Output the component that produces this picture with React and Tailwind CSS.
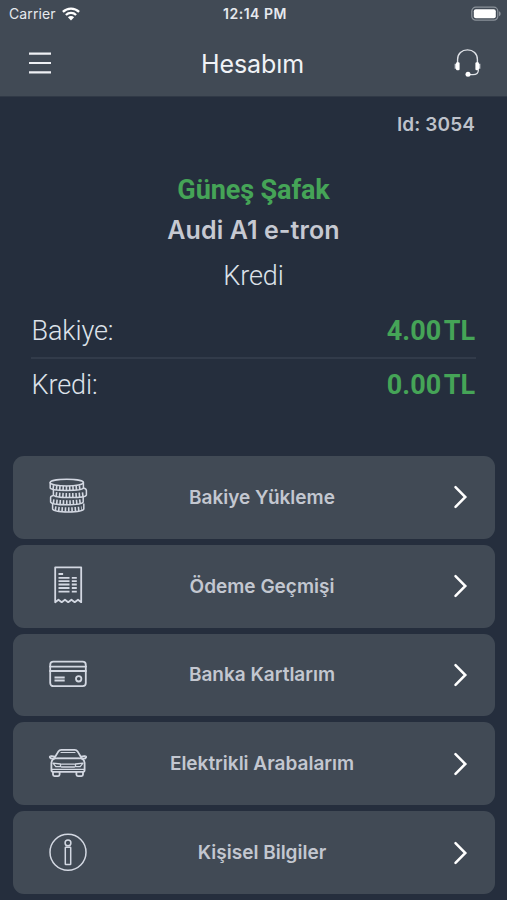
import React from "react";

const INTER = "font-['Inter','Liberation_Sans',sans-serif]";
const ROBOTO = "font-['Roboto','Liberation_Sans',sans-serif]";

function Icon({ children }) {
  return (
    <svg width="40" height="40" viewBox="0 0 40 40" fill="none" stroke="currentColor" strokeWidth="1.8" strokeLinecap="round" strokeLinejoin="round" className="shrink-0">
      {children}
    </svg>
  );
}

function CoinsIcon() {
  return (
    <Icon>
      <g strokeWidth="1.5">
        <ellipse cx="18.8" cy="5.6" rx="16.6" ry="3.3" />
        <path d="M2.2 5.6v5.4Q3 13.400 18.800 13.400T35.400 11V5.600" />
        <path d="M5.400 13v5Q6.200 20.600 22 20.600T38.400 18v-4.500c0-1.200-1.200-2-3-2.500" />
        <path d="M5.400 18.500c-1.800.4-2.800 1-2.800 2V25Q3.400 27.800 18.800 27.800T35.200 25v-4.500" />
        <path d="M4.600 27v5Q5.400 34.900 20.200 34.900T35.800 32v-5" />
      </g>
      <path d="M4.500 10.300q14.300 2 29 0M7.600 17.300q14.300 2 29 0M4.800 24.400q14.300 2 28.400 0M6.800 31.500q13.400 2 27 0" strokeWidth="4.400" strokeDasharray="1.600 1.700" strokeLinecap="butt" />
    </Icon>
  );
}

function ReceiptIcon() {
  return (
    <Icon>
      <path d="M7.200 36.200V1.300h26v34.900l-3.200-2.500-3.300 2.500-3.250-2.500-3.250 2.500-3.250-2.500-3.250 2.500-3.250-2.500z" />
      <path d="M10.500 8h4.600M10.500 11.800h11M10.500 15.200h11M10.500 18.500h11M10.500 22h11M10.500 25.700h11M23.800 11.800h5M23.800 15.200h5M23.800 18.500h5M23.800 22h5M23.800 25.700h5" strokeLinecap="butt" />
    </Icon>
  );
}

function CardIcon() {
  return (
    <Icon>
      <rect x="2.200" y="6.700" width="35.600" height="24.500" rx="3.200" />
      <path d="M2 11.600h36M2 16h36" />
      <path d="M6.500 22.500h10.200M6.500 25.500h10.200" strokeLinecap="butt" />
      <circle cx="30.700" cy="23.800" r="2.700" />
    </Icon>
  );
}

function CarIcon() {
  return (
    <Icon>
      <path d="M6.300 14.300 10.400 7.400c.7-1.100 1.500-1.600 2.900-1.600h13.400c1.400 0 2.200.5 2.900 1.600l4.100 6.900" />
      <path d="M9 14.300h22M13 8.500h14" strokeWidth="1.200" />
      <path d="M6.300 14.300c-1.700 1.200-2.900 2.600-2.900 4.500v7.100c0 1.200.7 1.900 1.900 1.900h29.400c1.200 0 1.900-.7 1.900-1.900v-7.100c0-1.900-1.200-3.300-2.900-4.500z" />
      <path d="M6 14.600c-1.900.3-3.800-.3-4.200-1.500-.3-1 2.300-1.400 4.800-.5M34 14.600c1.900.3 3.800-.3 4.200-1.500.3-1-2.300-1.400-4.800-.5" />
      <path d="M5 28v2.600c0 1 .5 1.500 1.500 1.500h3.600c1 0 1.500-.5 1.500-1.500V28M28.400 28v2.600c0 1 .5 1.500 1.500 1.500h3.600c1 0 1.500-.5 1.500-1.500V28" />
      <path d="M13.500 20.200h13M13.500 23h13M4 25.300h32M5 19.200l7.500.8v2.600H7.800L5 19.200M35 19.200l-7.500.8v2.600h4.700z" strokeWidth="1.300" />
    </Icon>
  );
}

function InfoIcon() {
  return (
    <Icon>
      <g strokeWidth="1.500">
        <circle cx="20" cy="19.200" r="18" />
        <circle cx="20" cy="9.900" r="2.900" />
        <rect x="17.300" y="14.200" width="5.400" height="17.200" rx=".5" />
      </g>
    </Icon>
  );
}

const items = [
  { label: "Bakiye Yükleme", icon: CoinsIcon },
  { label: "Ödeme Geçmişi", icon: ReceiptIcon },
  { label: "Banka Kartlarım", icon: CardIcon },
  { label: "Elektrikli Arabalarım", icon: CarIcon },
  { label: "Kişisel Bilgiler", icon: InfoIcon },
];

function StatusBar() {
  return (
    <div className="grid h-7 grid-cols-3 items-center pl-[9px] pr-[6px] text-[13px] leading-none text-[#e6e9ee]">
      <div className="flex items-center gap-[6px]">
        <span className="text-[14px] tracking-[0.1px]">Carrier</span>
        <svg width="18" height="14" viewBox="0 0 18 14" fill="none" stroke="#fff" strokeWidth="2.300">
          <path d="M.9 4.900a11.600 11.600 0 0 1 16.200 0M3.900 8a7.300 7.300 0 0 1 10.200 0" />
          <path d="M5.900 10.200a4.400 4.400 0 0 1 6.200 0L9 13.500z" fill="#fff" stroke="none" />
        </svg>
      </div>
      <span className="text-center text-[14px] font-semibold tracking-[0.5px] whitespace-nowrap">12:14 PM</span>
      <svg width="30" height="16" viewBox="0 0 30 16" className="justify-self-end">
        <rect x=".8" y="1.200" width="26" height="13" rx="4" fill="none" stroke="#8b929a" strokeWidth="1.200" />
        <rect x="2.800" y="3.200" width="22" height="9" rx="2" fill="#fff" />
        <path d="M28 5.200c2.200.8 2.200 4.200 0 5z" fill="#8b929a" />
      </svg>
    </div>
  );
}

function NavBar() {
  return (
    <div className="flex h-[69px] items-center justify-between pt-px pl-[29px] pr-[26px]">
      <svg width="22" height="24" viewBox="0 0 22 24" stroke="#eef0f4" strokeWidth="2.200">
        <path d="M0 2.700h22M0 12h22M0 21.300h22" />
      </svg>
      <h1 className="pt-px text-[25px] leading-[30px] font-normal tracking-[-0.1px] text-[#f0f2f6]">Hesabım</h1>
      <svg width="27" height="30" viewBox="0 0 27 30" fill="none" stroke="#dfe2e7">
        <path d="M3.600 15v-3.400C3.600 5.800 7.800 1.900 13.500 1.900s9.900 3.900 9.900 9.700V15" strokeWidth="1.400" />
        <path d="M24.400 22c0 3.200-2.500 4.700-5.400 4.700h-4" strokeWidth="1.300" />
        <rect x="2" y="14.300" width="3.600" height="8" rx="1.200" fill="#fff" stroke="none" />
        <rect x="21.400" y="14.300" width="3.600" height="8" rx="1.200" fill="#fff" stroke="none" />
        <path d="M1.300 15.800v5M25.700 15.800v5" strokeWidth="1.200" />
        <circle cx="14" cy="26.300" r="2.500" fill="#fff" stroke="none" />
      </svg>
    </div>
  );
}

function BalanceRow({ label, value }) {
  return (
    <div className={`flex items-center justify-between pr-[1px] pl-[0.500px] leading-[40px] ${ROBOTO}`}>
      <span className="text-[27px] font-light tracking-[-0.100px] text-[#dde2ea]">{label}</span>
      <span className="text-[27px] font-bold text-[#45a457] [word-spacing:-3.500px]">{value}</span>
    </div>
  );
}

export default function App() {
  return (
    <div className={`flex h-[900px] w-[507px] flex-col overflow-hidden bg-[#252e3d] ${INTER}`}>
      <header className="h-[97px] shrink-0 border-b border-[#303946] bg-[#414a55]">
        <StatusBar />
        <NavBar />
      </header>
      <section className="flex h-[207px] shrink-0 flex-col items-center">
        <p className="mt-[16px] mr-[32px] self-end text-[19px] leading-[24px] font-semibold tracking-[0.100px] text-[#bec2cb]">Id: 3054</p>
        <h2 className={`mt-[37px] text-[27px] leading-[32px] font-bold tracking-[-0.100px] text-[#45a457] ${ROBOTO}`}>Güneş Şafak</h2>
        <p className="mt-[8px] text-[25px] leading-[32px] font-semibold tracking-[0.100px] text-[#c6c9d2]">Audi A1 e-tron</p>
        <p className={`mt-[14px] text-[27px] leading-[32px] font-light tracking-[-0.100px] text-[#dde2ea] ${ROBOTO}`}>Kredi</p>
      </section>
      <section className="h-[152px] shrink-0 px-[31px] pt-[7px]">
        <BalanceRow label="Bakiye:" value="4.00 TL" />
        <div className="mt-[6px] mb-[6px] h-[1.500px] bg-[#323b4a]" />
        <BalanceRow label="Kredi:" value="0.00 TL" />
      </section>
      <nav className="flex shrink-0 flex-col gap-[6px] pl-[13px] pr-[12px]">
        {items.map(({ label, icon: Glyph }) => (
          <button key={label} className="flex h-[82.800px] items-center rounded-[11px] bg-[#414a55] pl-[35px] pr-[25px] text-[#d3d8e2]">
            <Glyph />
            <span className="grow pt-[1px] pr-[16px] text-center text-[19px] leading-[24px] font-semibold whitespace-nowrap text-[#c3c7d0]">{label}</span>
            <svg width="18" height="24" viewBox="0 0 18 24" fill="none" stroke="#fff" strokeWidth="2.500" strokeLinecap="round">
              <path d="m3.500 2.200 9.800 9.800-9.800 9.800" />
            </svg>
          </button>
        ))}
      </nav>
    </div>
  );
}
